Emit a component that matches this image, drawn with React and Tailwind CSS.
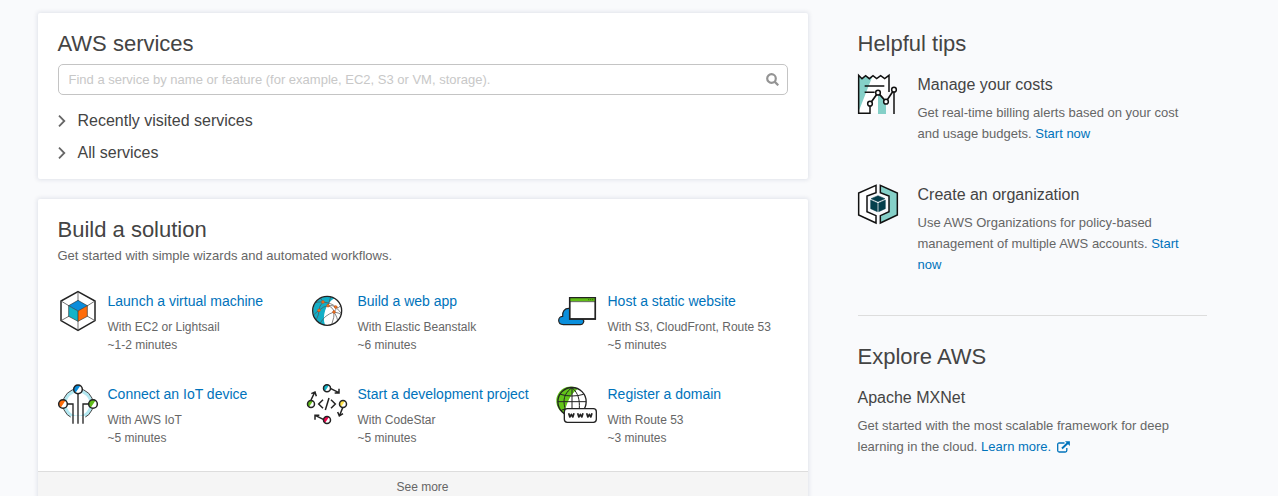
import React from "react";

function Icon({ children }) {
  return (
    <svg className="h-10 w-10 shrink-0 overflow-visible" viewBox="24 18 120 120" fill="none" stroke="#232323" strokeWidth="4.500" aria-hidden="true">
      {children}
    </svg>
  );
}

function MachineIcon() {
  return (
    <Icon>
      <path d="M84 20 135 48V107L84 136 33 107V48Z" fill="#fff" strokeWidth="4.500" />
      <path d="M84 20V48M33 48 58 63M135 48 111 63M33 107 58 93M135 107 111 93M84 136V108" stroke="#555" strokeWidth="2.500" />
      <path d="M84 46 112 62 84 78 56 62Z" fill="#0a8ddb" stroke="none" />
      <path d="M56 62 84 78V109L56 94Z" fill="#13b3c8" stroke="none" />
      <path d="M112 62 84 78V109L112 94Z" fill="#ff6c0a" stroke="none" />
      <path d="M84 46 112 62V94L84 109 56 94V62ZM56 62 84 78 112 62M84 78V109" strokeWidth="1.800" />
    </Icon>
  );
}

function WebAppIcon() {
  return (
    <Icon>
      <circle cx="81.500" cy="77.500" r="43" fill="#fff" stroke="none" />
      <path d="M103 40A43 43 0 1 0 75 120C66 95 76 56 103 40Z" fill="#12aec6" stroke="none" />
      <path d="M69 51Q96 54 107 66T123 84M69 51 60 37M69 51Q57 63 57 76T49 104M57 76Q70 64 84 62T107 66 123 61M84 62Q100 68 102 81T95 119M102 81Q74 90 61 114M102 81Q118 84 123 88M107 66Q110 74 102 81M84 62 92 36M57 76Q43 86 40 91M69 51Q51 50 47 53M102 81Q114 101 112 108" stroke="#555" strokeWidth="2.200" />
      <circle cx="81.500" cy="77.500" r="43.500" strokeWidth="4" />
      <g fill="#f47b20" stroke="#c65016" strokeWidth="2">
        <circle cx="69" cy="51" r="4" />
        <circle cx="84" cy="62" r="4" />
        <circle cx="57" cy="76" r="4" />
        <circle cx="107" cy="66" r="4" />
        <circle cx="102" cy="81" r="4" />
      </g>
    </Icon>
  );
}

function WebsiteIcon() {
  return (
    <Icon>
      <path d="M40 119C31 119 26 113 26 106S32 94 38 94C36 80 44 70 56 70S74 79 77 88C91 83 100 92 98 102 105 109 99 119 91 119Z" fill="#0a8fdc" strokeWidth="3.500" />
      <path d="M59 38H136V102H59Z" fill="#fff" />
      <path d="M60 39H135V49H60Z" fill="#60bd16" stroke="none" />
      <path d="M59 50H136" strokeWidth="2" />
      <path d="M114 44H131" stroke="#286400" strokeWidth="2.500" strokeDasharray="4 2" />
      <path d="M59 38H136V102H59Z" strokeWidth="4" />
    </Icon>
  );
}

function IotIcon() {
  return (
    <Icon>
      <circle cx="84" cy="78" r="39.500" stroke="#b4e8f1" strokeWidth="10" />
      <circle cx="84" cy="78" r="45.500" strokeWidth="2.500" />
      <path d="M62 114H106V141H62Z" fill="#fff" stroke="none" />
      <path d="M84 48V137M40 78H69V137M128 78H99V137" strokeWidth="4" />
      <circle cx="84" cy="34" r="13" fill="#fff" stroke="none" />
      <path d="M91 23A13 13 0 1 0 76 45Z" fill="#0a8ddb" stroke="none" />
      <circle cx="84" cy="34" r="13" />
      <circle cx="39" cy="78" r="13" fill="#fff" stroke="none" />
      <path d="M47 67A13 13 0 1 0 32 89Z" fill="#ff6c0a" stroke="none" />
      <circle cx="39" cy="78" r="13" />
      <circle cx="129" cy="78" r="13" fill="#fff" stroke="none" />
      <path d="M137 67A13 13 0 1 0 122 89Z" fill="#62bd19" stroke="none" />
      <circle cx="129" cy="78" r="13" />
    </Icon>
  );
}

function ProjectIcon() {
  return (
    <Icon>
      <path d="M69 65 56 78 69 91M93 65 106 78 93 91M87 60 76 96" strokeWidth="4.500" />
      <path d="M91 31 115 43M117 32V45H104M128 89 119 112M113 102 118 114 129 107M70 124 47 113M45 125V112H58M33 66 44 43M34 47 45 42 49 55" />
      <circle cx="81" cy="31" r="10" fill="#fff" stroke="none" />
      <path d="M87 22A10 10 0 1 0 75 40Z" fill="#13b3c8" stroke="none" />
      <circle cx="81" cy="31" r="10.500" />
      <circle cx="33" cy="78" r="10" fill="#fff" stroke="none" />
      <path d="M39 69A10 10 0 1 0 27 87Z" fill="#62bd19" stroke="none" />
      <circle cx="33" cy="78" r="10.500" />
      <circle cx="129" cy="78" r="10" fill="#fff" stroke="none" />
      <path d="M135 69A10 10 0 1 0 123 87Z" fill="#ffe34a" stroke="none" />
      <circle cx="129" cy="78" r="10.500" />
      <circle cx="81" cy="126" r="10" fill="#fff" stroke="none" />
      <path d="M87 117A10 10 0 1 0 75 135Z" fill="#f2004c" stroke="none" />
      <circle cx="81" cy="126" r="10.500" />
    </Icon>
  );
}

function DomainIcon() {
  return (
    <Icon>
      <circle cx="66" cy="71" r="42" fill="#fff" stroke="none" />
      <path d="M84 32A43 43 0 1 0 42 107C50 79 57 51 84 32Z" fill="#62c51a" stroke="none" />
      <circle cx="66" cy="71" r="42.500" strokeWidth="4" />
      <path d="M66 29V92M24 71H108M31 49Q66 59 101 49M66 29C30 55 44 83 49 108M66 29C86 46 89 66 88 92M33 98Q38 94 46 93" strokeWidth="3" />
      <rect x="43" y="92" width="96" height="41" rx="9" fill="#fff" strokeWidth="4" />
      <path d="M56 106 59.500 117 64 109 68.500 117 72 106M83 106 86.500 117 91 109 95.500 117 99 106M110 106 113.500 117 118 109 122.500 117 126 106" strokeWidth="5" strokeLinejoin="round" />
    </Icon>
  );
}

function CostsIcon() {
  return (
    <Icon>
      <path d="M26 23 36 32 47 23 58 32 69 23 80 32 92 23 104 32 117 23V60L83 136H26Z" fill="#fff" stroke="none" />
      <path d="M26 23 36 32 47 23 58 32 68 23 28 125H26Z" fill="#85d0c8" stroke="none" />
      <path d="M84 76 108 98V138H84Z" fill="#85d0c8" stroke="none" />
      <path d="M60 136H26V22L36 32 47 23 58 32 69 23 80 32 92 23 104 32 117 22V72M60 113V138M132 72V138" stroke="#111" />
      <path d="M44 54H103M44 73H74" stroke="#111" />
      <path d="M60 107 84 74 108 101 132 65" stroke="#111" strokeWidth="5" />
      <g fill="#fff" stroke="#111" strokeWidth="4.500">
        <circle cx="60" cy="107" r="7" />
        <circle cx="84" cy="74" r="7" />
        <circle cx="108" cy="101" r="7" />
        <circle cx="132" cy="65" r="7" />
      </g>
    </Icon>
  );
}

function OrganizationIcon() {
  return (
    <Icon>
      <path d="M78 22V44L51 54V101L78 113V135L26 111V45Z" fill="#fff" stroke="#111" />
      <path d="M91 22V44L117 54V101L91 113V135L142 111V45Z" fill="#85d0c8" stroke="#111" />
      <path d="M84 53 105 62 84 71 63 62ZM62 66 82 75V101L62 92ZM106 66 86 75V101L106 92Z" fill="#043f4c" stroke="#043f4c" strokeWidth="1.500" />
    </Icon>
  );
}

const SOLUTIONS = [
  { icon: MachineIcon, title: "Launch a virtual machine", detail: "With EC2 or Lightsail", time: "~1-2 minutes" },
  { icon: WebAppIcon, title: "Build a web app", detail: "With Elastic Beanstalk", time: "~6 minutes" },
  { icon: WebsiteIcon, title: "Host a static website", detail: "With S3, CloudFront, Route 53", time: "~5 minutes" },
  { icon: IotIcon, title: "Connect an IoT device", detail: "With AWS IoT", time: "~5 minutes" },
  { icon: ProjectIcon, title: "Start a development project", detail: "With CodeStar", time: "~5 minutes" },
  { icon: DomainIcon, title: "Register a domain", detail: "With Route 53", time: "~3 minutes" },
];

function ExpandRow({ label }) {
  return (
    <button className="flex h-8 w-full items-center text-left text-base text-[#444]">
      <svg className="mr-3 h-3 w-2" viewBox="0 0 8 12" fill="none" stroke="#666" strokeWidth="1.800">
        <path d="M1 .7 6.300 6 1 11.300" />
      </svg>
      {label}
    </button>
  );
}

function Tip({ icon: TipIcon, title, children }) {
  return (
    <article className="flex gap-5">
      <TipIcon />
      <div>
        <h3 className="mt-px text-base leading-5 text-[#444]">{title}</h3>
        <p className="mt-[7px] w-[270px] text-[13px] leading-[21px]">{children}</p>
      </div>
    </article>
  );
}

export default function App() {
  return (
    <div className="flex h-[496px] gap-[50px] overflow-hidden bg-[#f9fafc] pl-[37.5px] pt-[13px] font-['Liberation_Sans',Arial,sans-serif] text-[#666]">
      <main className="flex w-[770px] shrink-0 flex-col gap-5">
        <section className="h-[166px] shrink-0 rounded-xs bg-white px-5 pt-4 shadow-[0_0_4px_1px_rgba(0,28,80,0.1)]">
          <h2 className="text-[22px] leading-[30px] text-[#444]">AWS services</h2>
          <label className="mt-[5px] flex h-[31px] items-center rounded-[5px] border border-[#c4c4c4] pl-2.5 pr-2">
            <input className="min-w-0 flex-1 text-[13px] outline-none placeholder:text-[#c8c8c8]" placeholder="Find a service by name or feature (for example, EC2, S3 or VM, storage)." />
            <svg className="h-[13px] w-[13px]" viewBox="0 0 13 13" fill="none" stroke="#949494" strokeWidth="2.200">
              <circle cx="5.500" cy="5.500" r="4.300" />
              <path d="m8.600 8.600 3.700 3.700" />
            </svg>
          </label>
          <div className="mt-2.5">
            <ExpandRow label="Recently visited services" />
            <ExpandRow label="All services" />
          </div>
        </section>

        <section className="shrink-0 rounded-xs bg-white shadow-[0_0_4px_1px_rgba(0,28,80,0.1)]">
          <div className="h-[272px] px-5 pt-4">
            <h2 className="text-[22px] leading-[30px] text-[#444]">Build a solution</h2>
            <p className="mt-px text-[13px] leading-5">Get started with simple wizards and automated workflows.</p>
            <div className="mt-[25px] grid grid-cols-[250px_250px_230px] gap-y-[30px]">
              {SOLUTIONS.map(({ icon: SolutionIcon, title, detail, time }) => (
                <article key={title} className="flex h-[63px] gap-2.5">
                  <SolutionIcon />
                  <div className="whitespace-nowrap">
                    <h3 className="text-[14px] leading-5 text-[#0073bb]">{title}</h3>
                    <p className="mt-[7px] text-xs leading-[18px]">{detail}</p>
                    <p className="text-xs leading-[18px]">{time}</p>
                  </div>
                </article>
              ))}
            </div>
          </div>
          <button className="h-[30px] w-full border-t border-[#ddd] bg-[#f5f5f5] text-xs">See more</button>
        </section>
      </main>

      <aside className="w-[349px] shrink-0 pt-4">
        <h2 className="text-[22px] leading-[30px] text-[#444]">Helpful tips</h2>
        <div className="mt-[15px] flex h-[241px] flex-col gap-10">
          <Tip icon={CostsIcon} title="Manage your costs">
            Get real-time billing alerts based on your cost and usage budgets. <a className="text-[#0073bb]">Start now</a>
          </Tip>
          <Tip icon={OrganizationIcon} title="Create an organization">
            Use AWS Organizations for policy-based management of multiple AWS accounts. <a className="text-[#0073bb]">Start now</a>
          </Tip>
        </div>
        <hr className="border-[#ddd]" />
        <h2 className="mt-[26px] text-[22px] leading-[30px] text-[#444]">Explore AWS</h2>
        <h3 className="mt-4 text-base leading-5 text-[#444]">Apache MXNet</h3>
        <p className="mt-[7px] w-[330px] text-[13px] leading-[21px]">
          Get started with the most scalable framework for deep learning in the cloud.{" "}
          <a className="text-[#0073bb]">
            Learn more.
            <svg className="ml-1.5 inline h-3 w-[13px] align-[-2px]" viewBox="0 0 13 12" fill="none" stroke="#0073bb" strokeWidth="1.300">
              <path d="M7.500 2H2.200Q.7 2 .7 3.500V9.500Q.7 11 2.200 11H8.300Q9.800 11 9.800 9.500V7" />
              <path d="M5 7.500 11 1.700" strokeWidth="1.900" />
              <path d="M8 .2H12.900V5Z" fill="#0073bb" stroke="none" />
            </svg>
          </a>
        </p>
      </aside>
    </div>
  );
}
